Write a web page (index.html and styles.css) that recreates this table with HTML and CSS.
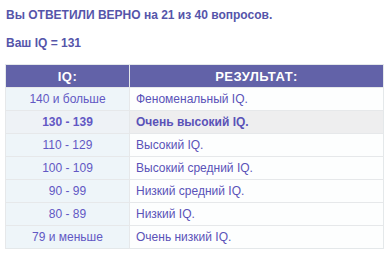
FILE: index.html
```html
<!DOCTYPE html>
<html lang="ru">
<head>
    <meta charset="UTF-8">
    <title>Результат теста IQ</title>
    <link rel="stylesheet" href="styles.css">
</head>
<body>
    <div class="result">
        <p class="score">Вы ОТВЕТИЛИ ВЕРНО на 21 из 40 вопросов.</p>
        <p class="score">Ваш IQ = 131</p>

        <table class="iq-table">
            <thead>
                <tr>
                    <th class="col-iq">IQ:</th>
                    <th>РЕЗУЛЬТАТ:</th>
                </tr>
            </thead>
            <tbody>
                <tr><td class="col-iq">140 и больше</td><td>Феноменальный IQ.</td></tr>
                <!-- строка с текущим результатом -->
                <tr class="current"><td class="col-iq">130 - 139</td><td>Очень высокий IQ.</td></tr>
                <tr><td class="col-iq">110 - 129</td><td>Высокий IQ.</td></tr>
                <tr><td class="col-iq">100 - 109</td><td>Высокий средний IQ.</td></tr>
                <tr><td class="col-iq">90 - 99</td><td>Низкий средний IQ.</td></tr>
                <tr><td class="col-iq">80 - 89</td><td>Низкий IQ.</td></tr>
                <tr><td class="col-iq">79 и меньше</td><td>Очень низкий IQ.</td></tr>
            </tbody>
        </table>
    </div>
</body>
</html>
```

FILE: styles.css
```css
body {
    margin: 0;
    background: #ffffff;
    font-family: 'Liberation Sans', Arial, sans-serif;
}
.result {
    padding: 8px 8px 0 5px;
}
.score {
    margin: 0 0 14px 1px;
    font-size: 12px;
    font-weight: bold;
    color: #5555aa;
    line-height: 14px;
}
.iq-table {
    width: 379px;
    margin-top: 14px;
    border-collapse: collapse;
    border: 1px solid #e4e8ea;
    font-size: 12px;
    color: #5a52b8;
}
.iq-table th {
    height: 22px;
    padding: 0;
    background-color: #6262a8;
    color: #ffffff;
    font-size: 13px;
    letter-spacing: 0.5px;
    text-align: center;
    border-left: 1px solid #e4e8ea;
}
.iq-table td {
    height: 22px;
    padding: 0 6px;
    border-top: 1px solid #e6e8ea;
    border-left: 1px solid #e6e8ea;
    text-align: left;
    background-color: #fdfefe;
}
.iq-table td.col-iq {
    width: 111px;
    text-align: center;
    color: #6258c4;
    background-color: #eef5f9;
}
.iq-table .current td {
    background-color: #eeeeef;
    font-weight: bold;
}
.iq-table .current td.col-iq {
    background-color: #eef2f6;
}
```
